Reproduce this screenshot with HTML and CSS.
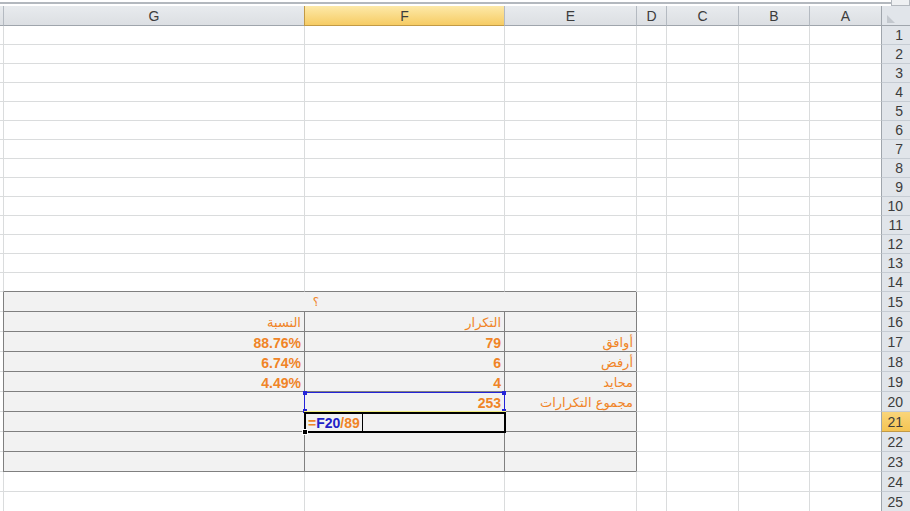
FILE: index.html
```html
<!DOCTYPE html>
<html lang="ar">
<head>
    <meta charset="UTF-8">
    <meta name="viewport" content="width=device-width, initial-scale=1.0">
    <title>Book1 - Excel</title>
    <link rel="stylesheet" href="styles.css">
</head>
<body>
<div class="topBar">
    <div class="topLine"></div>
    <div class="splitBox"></div>
</div>
<div id="sheet" class="sheet"></div>

<script>
    const sheet = document.getElementById('sheet');
    const letters = ['', 'G', 'F', 'E', 'D', 'C', 'B', 'A'];

    // table body, columns G / F / E
    const data = {
        16: [['النسبة', 'ar'], ['التكرار', 'ar'], null],
        17: [['88.76%'], ['79'], ['أوافق', 'ar']],
        18: [['6.74%'], ['6'], ['أرفض', 'ar']],
        19: [['4.49%'], ['4'], ['محايد', 'ar']],
        20: [null, ['253'], ['مجموع التكرارات', 'ar']]
    };

    function cell(cls, text) {
        const d = document.createElement('div');
        d.className = 'cell ' + cls;
        if (text) d.textContent = text;
        return d;
    }

    // column headers
    const head = document.createElement('div');
    head.className = 'row headRow';
    letters.forEach((l, i) => {
        head.appendChild(cell('colHead' + (i === 0 ? ' first' : '') + (l === 'F' ? ' selected' : ''), l));
    });
    const corner = cell('corner');
    corner.innerHTML = '<span class="cornerMark"></span>';
    head.appendChild(corner);
    sheet.appendChild(head);

    for (let r = 1; r <= 25; r++) {
        const row = document.createElement('div');
        row.className = 'row' + (r >= 15 ? ' tall' : '');
        const inTable = r >= 15 && r <= 23;

        row.appendChild(cell('first'));

        if (r === 15) {
            row.appendChild(cell('tbl merged', '؟'));
        } else {
            for (let c = 0; c < 3; c++) {
                let cls = inTable ? 'tbl' : (r === 14 ? 'above' : '');
                const item = data[r] && data[r][c];
                let d;
                if (r === 20 && c === 1) {
                    d = cell(cls + ' range', item[0]);
                    d.innerHTML += '<span class="handle tl"></span><span class="handle tr"></span>' +
                        '<span class="handle bl"></span><span class="handle br"></span>';
                } else if (r === 21 && c === 1) {
                    d = cell(cls + ' active');
                    d.innerHTML = '<span class="op">=</span><span class="ref">F20</span>' +
                        '<span class="op">/89</span><span class="caret"></span><span class="fill"></span>';
                } else {
                    d = cell(cls + (item && item[1] ? ' ' + item[1] : ''), item ? item[0] : '');
                }
                row.appendChild(d);
            }
        }

        row.appendChild(cell(inTable ? 'afterTbl' : ''));
        row.appendChild(cell(''));
        row.appendChild(cell(''));
        row.appendChild(cell(''));
        row.appendChild(cell('rowHead' + (r === 21 ? ' selected' : ''), String(r)));
        sheet.appendChild(row);
    }
</script>
</body>
</html>
```

FILE: styles.css
```css
html, body {
    margin: 0;
    overflow: hidden;
    background-color: #ffffff;
}

body {
    font-family: "Liberation Sans", Arial, "DejaVu Sans", sans-serif;
    width: 910px;
    height: 511px;
}

.topBar {
    display: flex;
    height: 6px;
}

.topLine {
    flex: 1;
    height: 2px;
    margin-top: 2px;
    background-color: #b3b8be;
}

.splitBox {
    width: 17px;
    height: 5px;
    border: 1px solid #b3b8be;
    border-top: none;
    background-color: #eef0f2;
}

.row {
    display: grid;
    grid-template-columns: 3px 301px 200px 132px 30px 72px 71px 72px 29px;
    height: 19px;
}

.row.tall {
    height: 20px;
}

.row.headRow {
    height: 20px;
}

.cell {
    box-sizing: border-box;
    border-left: 1px solid #dadcdd;
    border-bottom: 1px solid #dadcdd;
    display: flex;
    align-items: flex-end;
    justify-content: flex-end;
    padding: 0 3px 0 0;
    font-size: 14px;
    line-height: 16px;
    font-weight: bold;
    color: #f08427; /* orange cell text */
    white-space: nowrap;
    min-width: 0;
}

.cell.first {
    border-left: none;
    padding: 0;
}

/* bordered table G15:E23 */
.tbl {
    background-color: #f2f2f2;
    border-left-color: #808080;
    border-bottom-color: #808080;
}

.above {
    border-bottom-color: #808080;
}

.afterTbl {
    border-left-color: #808080;
}

.merged {
    grid-column: span 3;
    justify-content: center;
    align-items: center;
    font-weight: normal;
    font-size: 12px;
    padding-right: 8px;
}

.ar {
    font-family: "DejaVu Sans", sans-serif;
    font-weight: normal;
    font-size: 13px;
}

/* headers */
.colHead {
    background: linear-gradient(#e8ebee, #dcdfe3);
    border-left-color: #b4bac1;
    border-bottom-color: #9fa5ac;
    justify-content: center;
    align-items: center;
    padding: 0;
    font-weight: normal;
    font-size: 14px;
    color: #3c3c3c;
}

.colHead.first {
    border-left: none;
}

.colHead.selected {
    background: linear-gradient(#fde9a9, #f6cc64);
    border-left-color: #c29a45;
    border-bottom-color: #c29a45;
}

.corner {
    background-color: #e1e5ea;
    border-left-color: #9fa5ac;
    border-bottom-color: #9fa5ac;
    padding: 0;
    position: relative;
}

.cornerMark {
    position: absolute;
    left: 5px;
    top: 9px;
    width: 0;
    height: 0;
    border-bottom: 8px solid #c3c8ce;
    border-right: 8px solid transparent;
}

.rowHead {
    background-color: #e1e5ea;
    border-left-color: #9fa5ac;
    border-bottom-color: #c6ccd3;
    align-items: center;
    padding-right: 7px;
    font-weight: normal;
    font-size: 14px;
    color: #3c3c3c;
}

.rowHead.selected {
    background: linear-gradient(#f9d57a, #f5c453);
    border-bottom-color: #c29a45;
}

/* referenced range F20 */
.range {
    position: relative;
}

.range::before {
    content: '';
    position: absolute;
    left: -1px;
    top: 0;
    right: -1px;
    bottom: -1px;
    border: 1px solid #2424d8;
}

.handle {
    position: absolute;
    width: 4px;
    height: 4px;
    background-color: #2424d8;
}

.handle.tl { left: -2px; top: -1px; }
.handle.tr { right: -2px; top: -1px; }
.handle.bl { left: -2px; bottom: -2px; }
.handle.br { right: -2px; bottom: -2px; }

/* cell being edited F21 */
.active {
    position: relative;
    justify-content: flex-start;
    padding: 0 0 0 3px;
}

.active::before {
    content: '';
    position: absolute;
    left: -1px;
    top: 0;
    right: -2px;
    bottom: -2px;
    border: 2px solid #000000;
}

.active::after {
    content: '';
    position: absolute;
    left: -1px;
    top: -1px;
    right: -2px;
    height: 1px;
    background-color: #f2ee7e;
}

.op {
    color: #f08427;
}

.ref {
    color: #2222c8;
}

.caret {
    width: 1px;
    height: 17px;
    margin-left: 2px;
    background-color: #000000;
    align-self: flex-end;
}

.fill {
    position: absolute;
    left: -3px;
    bottom: -4px;
    width: 4px;
    height: 4px;
    background-color: #000000;
    border: 1px solid #ffffff;
    z-index: 1;
}
```
